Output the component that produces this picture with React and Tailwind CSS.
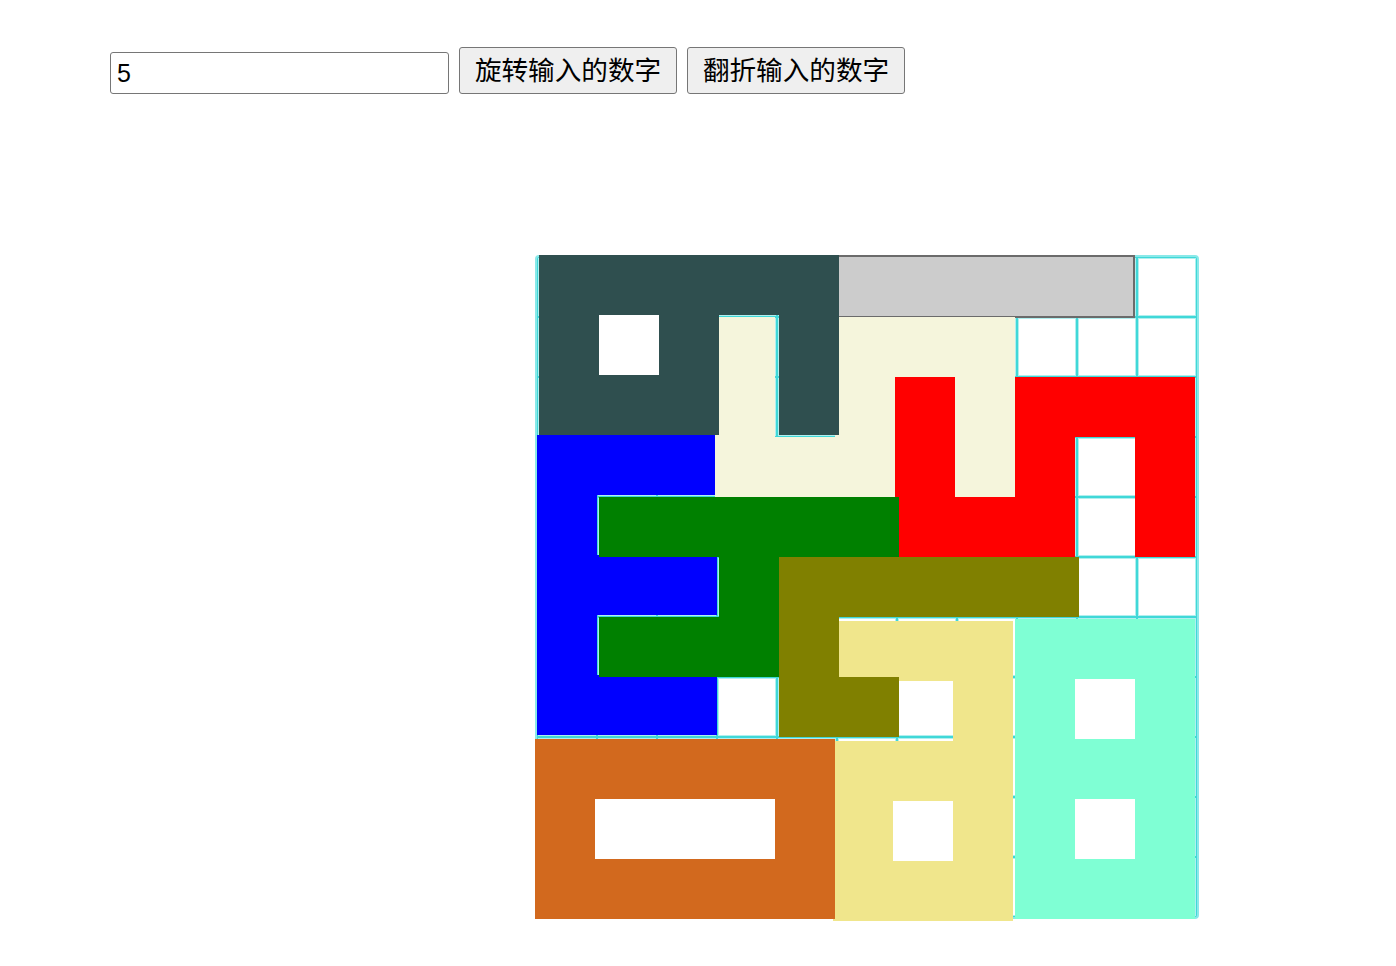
import React from 'react';

const CELL = 60;
const SIZE = 11;

// rows/cols of each piece on the 11x11 board; dx/dy are the small pixel nudges seen on the board
const pieces = [
    {
        color: 'bg-[#0000ff]', dx: 0, dy: -2,
        cells: [[3, 0], [3, 1], [3, 2], [4, 0], [5, 0], [5, 1], [5, 2], [6, 0], [7, 0], [7, 1], [7, 2]],
    },
    {
        color: 'bg-[#f5f5dc]', dx: -2, dy: 0,
        cells: [[1, 3], [2, 3], [3, 3], [3, 4], [3, 5], [2, 5], [1, 5], [1, 6], [1, 7], [2, 7], [3, 7]],
    },
    {
        color: 'bg-[#2f4f4f]', dx: 2, dy: -2,
        cells: [[0, 0], [0, 1], [0, 2], [0, 3], [0, 4], [1, 0], [1, 2], [1, 4], [2, 0], [2, 1], [2, 2], [2, 4]],
        holes: [[1, 1]],
    },
    {
        color: 'bg-[#ff0000]', dx: -2, dy: 0,
        cells: [[2, 6], [3, 6], [4, 6], [4, 7], [4, 8], [3, 8], [2, 8], [2, 9], [2, 10], [3, 10], [4, 10]],
    },
    {
        color: 'bg-[#008000]', dx: 2, dy: 0,
        cells: [[4, 1], [4, 2], [4, 3], [4, 4], [4, 5], [5, 3], [6, 1], [6, 2], [6, 3]],
    },
    {
        color: 'bg-[#f0e68c]', dx: -4, dy: 4,
        cells: [[6, 5], [6, 6], [6, 7], [7, 7], [8, 5], [8, 6], [8, 7], [9, 5], [9, 7], [10, 5], [10, 6], [10, 7]],
        holes: [[9, 6]],
    },
    {
        color: 'bg-[#808000]', dx: 2, dy: 0,
        cells: [[5, 4], [5, 5], [5, 6], [5, 7], [5, 8], [6, 4], [7, 4], [7, 5]],
    },
    {
        color: 'bg-[#7fffd4]', dx: -2, dy: 2,
        cells: [[6, 8], [6, 9], [6, 10], [7, 8], [7, 10], [8, 8], [8, 9], [8, 10], [9, 8], [9, 10], [10, 8], [10, 9], [10, 10]],
        holes: [[7, 9], [9, 9]],
    },
    {
        color: 'bg-[#d2691e]', dx: -2, dy: 2,
        cells: [[8, 0], [8, 1], [8, 2], [8, 3], [8, 4], [9, 0], [9, 4], [10, 0], [10, 1], [10, 2], [10, 3], [10, 4]],
        holes: [[9, 1], [9, 2], [9, 3]],
    },
];

const Piece = ({ piece }) => (
    <>
        {piece.cells.map(([r, c]) => (
            <div
                key={`c${r}-${c}`}
                className={`absolute w-[60px] h-[60px] ${piece.color}`}
                style={{ left: c * CELL + piece.dx, top: r * CELL + piece.dy }}
            />
        ))}
        {(piece.holes || []).map(([r, c]) => (
            <div
                key={`h${r}-${c}`}
                className="absolute w-[60px] h-[60px] bg-white"
                style={{ left: c * CELL + piece.dx, top: r * CELL + piece.dy }}
            />
        ))}
    </>
);

const Board = () => {
    const cells = Array.from({ length: SIZE * SIZE });
    return (
        <div className="relative w-[660px] h-[660px] ml-[537px] mt-[163px] outline-2 outline-[#8ae9e9] rounded-[2px]">
            <div className="grid grid-cols-[repeat(11,60px)] grid-rows-[repeat(11,60px)]">
                {cells.map((_, i) => (
                    <div key={i} className="border border-[#40d8d8] bg-white shadow-[inset_0_0_0_1px_rgba(80,220,220,0.45)]" />
                ))}
            </div>

            {/* the grey bar across the top row */}
            <div className="absolute left-[300px] top-[-2px] w-[298px] h-[63px] bg-[#cccccc] border-2 border-[#6b6b6b]" />

            {pieces.map((p, i) => (
                <Piece key={i} piece={p} />
            ))}
        </div>
    );
};

export default function App() {
    return (
        <div className="min-h-screen bg-white pb-12" style={{ fontFamily: '"Liberation Sans", "Noto Sans CJK SC", sans-serif' }}>
            <div className="flex items-end gap-[10px] pl-[110px] pt-[47px]">
                <input
                    type="text"
                    defaultValue="5"
                    className="w-[339px] h-[42px] border border-[#767676] rounded-[3px] px-[6px] text-[25px] text-black bg-white outline-none"
                />
                <button className="w-[218px] h-[47px] flex items-center justify-center pt-[3px] bg-[#efefef] border border-[#767676] rounded-[3px] text-[26.6px] text-black">
                    旋转输入的数字
                </button>
                <button className="w-[218px] h-[47px] flex items-center justify-center pt-[3px] bg-[#efefef] border border-[#767676] rounded-[3px] text-[26.6px] text-black">
                    翻折输入的数字
                </button>
            </div>

            <Board />
        </div>
    );
}
